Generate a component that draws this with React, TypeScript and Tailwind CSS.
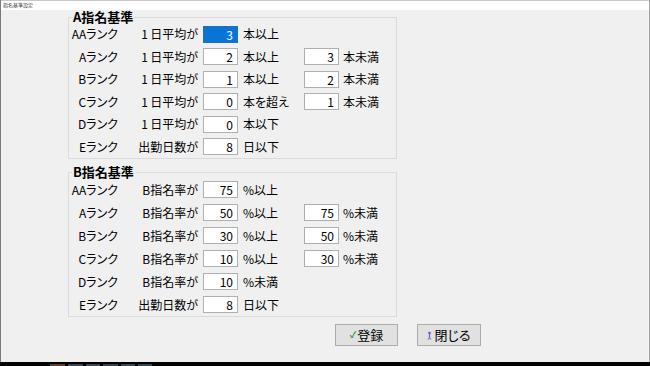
import React from 'react'

type Row = {
  rank: string
  cond: string
  v1: string
  u1: string
  v2?: string
  u2?: string
  active?: boolean
}

const avg = '1\u2009日平均が'

const rowsA: Row[] = [
  { rank: 'AAランク', cond: avg, v1: '3', u1: '本以上', active: true },
  { rank: 'Aランク', cond: avg, v1: '2', u1: '本以上', v2: '3', u2: '本未満' },
  { rank: 'Bランク', cond: avg, v1: '1', u1: '本以上', v2: '2', u2: '本未満' },
  { rank: 'Cランク', cond: avg, v1: '0', u1: '本を超え', v2: '1', u2: '本未満' },
  { rank: 'Dランク', cond: avg, v1: '0', u1: '本以下' },
  { rank: 'Eランク', cond: '出勤日数が', v1: '8', u1: '日以下' },
]

const rowsB: Row[] = [
  { rank: 'AAランク', cond: 'B指名率が', v1: '75', u1: '%以上' },
  { rank: 'Aランク', cond: 'B指名率が', v1: '50', u1: '%以上', v2: '75', u2: '%未満' },
  { rank: 'Bランク', cond: 'B指名率が', v1: '30', u1: '%以上', v2: '50', u2: '%未満' },
  { rank: 'Cランク', cond: 'B指名率が', v1: '10', u1: '%以上', v2: '30', u2: '%未満' },
  { rank: 'Dランク', cond: 'B指名率が', v1: '10', u1: '%未満' },
  { rank: 'Eランク', cond: '出勤日数が', v1: '8', u1: '日以下' },
]

function NumBox({ value, active }: { value: string; active?: boolean }) {
  return (
    <div
      className={
        active
          ? 'w-[35px] h-[17px] border border-[#1c6fc4] bg-[#0a74d4] text-white text-right pr-[4px] leading-[15px]'
          : 'w-[35px] h-[17px] border border-[#b0b0b0] bg-white text-right pr-[4px] leading-[15px]'
      }
    >
      {value}
    </div>
  )
}

function Group({ title, rows, rowClass }: { title: string; rows: Row[]; rowClass: string }) {
  return (
    <fieldset className="w-[329px] border border-[#dadada]">
      <legend className="ml-[3px] px-[1px] text-[13px] leading-[12px] font-semibold">{title}</legend>
      {rows.map((r) => (
        <div key={r.rank} className={'flex items-center ' + rowClass}>
          <span className="w-[49px] text-right whitespace-nowrap">{r.rank}</span>
          <span className="w-[80px] text-right whitespace-nowrap">{r.cond}</span>
          <div className="ml-[5px]">
            <NumBox value={r.v1} active={r.active} />
          </div>
          <span className="ml-[5px] w-[61px] whitespace-nowrap">{r.u1}</span>
          {r.v2 && (
            <>
              <NumBox value={r.v2} />
              <span className="ml-[4px] whitespace-nowrap">{r.u2}</span>
            </>
          )}
        </div>
      ))}
    </fieldset>
  )
}

export default function App() {
  return (
    <div className="w-[650px] h-[366px] bg-black overflow-hidden font-['Noto_Sans_CJK_JP',sans-serif] [font-feature-settings:'palt'] text-[12px] text-black">
      <div className="h-[362px] bg-[#f0f0f0] border-l border-[#7a7a7a] border-r border-r-[#a8a8a8] flex flex-col">
        <div className="h-[10px] bg-white border-t border-[#c8c8c8] pl-[2px] text-[5px] leading-[8px] text-[#333]">
          指名基準設定
        </div>
        <div className="pl-[67px] pt-[1px]">
          <Group title="A指名基準" rows={rowsA} rowClass="h-[22.5px]" />
          <div className="h-[7px]" />
          <Group title="B指名基準" rows={rowsB} rowClass="h-[23px]" />
        </div>
        <div className="flex gap-[19px] pl-[334px] mt-[7px]">
          <button className="w-[63px] h-[22px] bg-[#e1e1e1] border border-[#adadad] flex items-center justify-center text-[13px]">
            <span className="text-[#1f9a2e] text-[9px] font-bold mr-[1px]">✓</span>登録
          </button>
          <button className="w-[64px] h-[22px] bg-[#e1e1e1] border border-[#adadad] flex items-center justify-center text-[13px]">
            <svg width="5" height="9" viewBox="0 0 5 9" className="mr-[2px]">
              <rect x="0.5" y="0.5" width="4" height="8" fill="#d8d0e8" />
              <circle cx="2.5" cy="2" r="1.2" fill="#6a4fa8" />
              <path d="M2.5 3.2 L2.5 6.5 M1.2 8.5 L2.5 6.5 L3.8 8.5" stroke="#6a4fa8" strokeWidth="0.9" fill="none" />
            </svg>
            閉じる
          </button>
        </div>
      </div>
      <div className="h-[4px] flex items-end">
        <div className="w-[50px]" />
        <div className="w-[15px] h-[2px] bg-[#6a3a26]" />
        <div className="w-[3px]" />
        <div className="w-[15px] h-[2px] bg-[#3a4652]" />
        <div className="w-[3px]" />
        <div className="w-[14px] h-[2px] bg-[#3a4652]" />
        <div className="w-[3px]" />
        <div className="w-[15px] h-[2px] bg-[#34424e]" />
        <div className="w-[3px]" />
        <div className="w-[14px] h-[2px] bg-[#3a4652]" />
        <div className="w-[3px]" />
        <div className="w-[14px] h-[2px] bg-[#36444e]" />
      </div>
    </div>
  )
}
